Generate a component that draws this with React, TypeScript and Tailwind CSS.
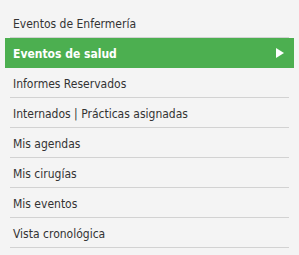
const items = [
  'Eventos de Enfermería',
  'Eventos de salud',
  'Informes Reservados',
  'Internados | Prácticas asignadas',
  'Mis agendas',
  'Mis cirugías',
  'Mis eventos',
  'Vista cronológica',
];

const ACTIVE = 1;

export default function App() {
  return (
    <div
      className="w-[299px] h-[255px] bg-[#f4f4f4] pt-[8px]"
      style={{ fontFamily: '"DejaVu Sans Condensed", Tahoma, sans-serif' }}
    >
      <ul>
        {items.map((label, i) =>
          i === ACTIVE ? (
            <li
              key={label}
              className="mx-[5px] h-[30px] bg-[#4caf50] pl-[8px] pr-[10px] pt-[2px] flex items-center justify-between text-white font-bold text-[12px]"
            >
              <span>{label}</span>
              <svg width="8" height="10" viewBox="0 0 8 10" className="-mt-[2px]">
                <polygon points="0,0 8,5 0,10" fill="#ffffff" />
              </svg>
            </li>
          ) : (
            <li
              key={label}
              className="mx-[10px] h-[30px] border-b border-[#d2d2d2] pl-[3px] pt-[2px] flex items-center text-[12px] text-[#333333]"
            >
              {label}
            </li>
          )
        )}
      </ul>
    </div>
  );
}
